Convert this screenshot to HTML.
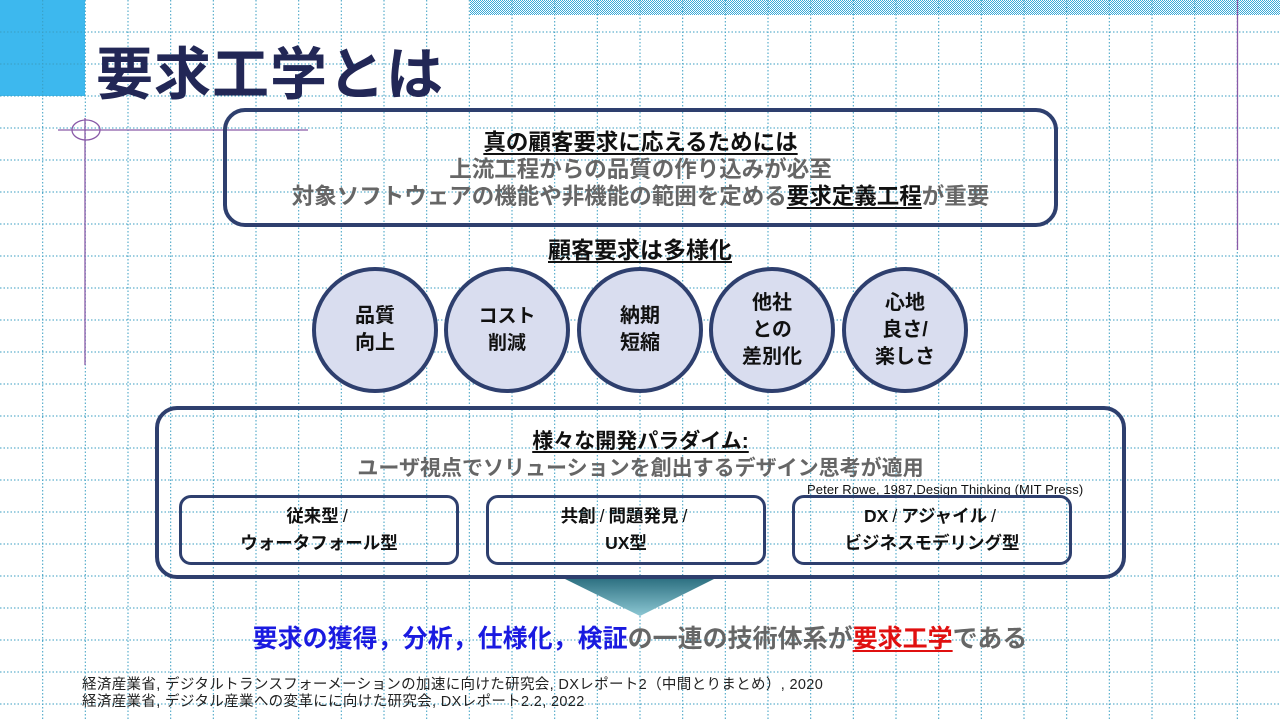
<!DOCTYPE html>
<html><head><meta charset="utf-8"><style>
*{margin:0;padding:0;box-sizing:border-box}
body{width:1280px;height:720px;position:relative;overflow:hidden;background:#fff;font-family:"Liberation Sans","Noto Sans CJK JP",sans-serif;font-weight:bold}
.grid{position:absolute;left:0;top:0;width:1280px;height:720px}
.abs{position:absolute}
.box{position:absolute;border:4px solid #2e3f6e;border-radius:22px}
.c{position:absolute;width:126px;height:126px;border-radius:50%;background:#d9ddef;border:4px solid #2e3f6e;display:flex;align-items:center;justify-content:center;text-align:center;font-size:20px;line-height:27px;color:#111}
.t{position:absolute;left:0;width:100%;text-align:center;white-space:nowrap}
.sb{position:absolute;border:3px solid #2e3f6e;border-radius:12px;display:flex;align-items:center;justify-content:center;text-align:center;font-size:17.5px;line-height:27px;color:#111}
u{text-decoration:underline;text-underline-offset:3px}
.sl{display:inline-block;margin:0 4px;font-weight:normal}
</style></head><body>
<svg class="grid" width="1280" height="720">
<defs>
<pattern id="chk" width="2" height="2" patternUnits="userSpaceOnUse"><rect width="2" height="2" fill="#fff"/><rect width="1" height="1" fill="#3aaad8"/><rect x="1" y="1" width="1" height="1" fill="#3aaad8"/></pattern>
<linearGradient id="ag" x1="0" y1="0" x2="0" y2="1"><stop offset="0" stop-color="#2c6f80"/><stop offset="1" stop-color="#8cc7d3"/></linearGradient>
</defs>
<rect x="0" y="0" width="85" height="96" fill="#3db8ee"/>
<rect x="470" y="0" width="810" height="15" fill="url(#chk)"/>
<g stroke="#3a9ec2" stroke-width="1" stroke-dasharray="1.5,2">
<line x1="42.7" y1="0" x2="42.7" y2="720"/><line x1="85.3" y1="0" x2="85.3" y2="720"/><line x1="128" y1="0" x2="128" y2="720"/><line x1="170.7" y1="0" x2="170.7" y2="720"/><line x1="213.3" y1="0" x2="213.3" y2="720"/><line x1="256" y1="0" x2="256" y2="720"/><line x1="298.7" y1="0" x2="298.7" y2="720"/><line x1="341.3" y1="0" x2="341.3" y2="720"/><line x1="384" y1="0" x2="384" y2="720"/><line x1="426.7" y1="0" x2="426.7" y2="720"/><line x1="469.3" y1="0" x2="469.3" y2="720"/><line x1="512" y1="0" x2="512" y2="720"/><line x1="554.7" y1="0" x2="554.7" y2="720"/><line x1="597.3" y1="0" x2="597.3" y2="720"/><line x1="640" y1="0" x2="640" y2="720"/><line x1="682.7" y1="0" x2="682.7" y2="720"/><line x1="725.3" y1="0" x2="725.3" y2="720"/><line x1="768" y1="0" x2="768" y2="720"/><line x1="810.7" y1="0" x2="810.7" y2="720"/><line x1="853.3" y1="0" x2="853.3" y2="720"/><line x1="896" y1="0" x2="896" y2="720"/><line x1="938.7" y1="0" x2="938.7" y2="720"/><line x1="981.3" y1="0" x2="981.3" y2="720"/><line x1="1024" y1="0" x2="1024" y2="720"/><line x1="1066.7" y1="0" x2="1066.7" y2="720"/><line x1="1109.3" y1="0" x2="1109.3" y2="720"/><line x1="1152" y1="0" x2="1152" y2="720"/><line x1="1194.7" y1="0" x2="1194.7" y2="720"/><line x1="1237.3" y1="0" x2="1237.3" y2="720"/>
<line x1="0" y1="32" x2="1280" y2="32"/><line x1="0" y1="64" x2="1280" y2="64"/><line x1="0" y1="96" x2="1280" y2="96"/><line x1="0" y1="128" x2="1280" y2="128"/><line x1="0" y1="160" x2="1280" y2="160"/><line x1="0" y1="192" x2="1280" y2="192"/><line x1="0" y1="224" x2="1280" y2="224"/><line x1="0" y1="256" x2="1280" y2="256"/><line x1="0" y1="288" x2="1280" y2="288"/><line x1="0" y1="320" x2="1280" y2="320"/><line x1="0" y1="352" x2="1280" y2="352"/><line x1="0" y1="384" x2="1280" y2="384"/><line x1="0" y1="416" x2="1280" y2="416"/><line x1="0" y1="448" x2="1280" y2="448"/><line x1="0" y1="480" x2="1280" y2="480"/><line x1="0" y1="512" x2="1280" y2="512"/><line x1="0" y1="544" x2="1280" y2="544"/><line x1="0" y1="576" x2="1280" y2="576"/><line x1="0" y1="608" x2="1280" y2="608"/><line x1="0" y1="640" x2="1280" y2="640"/><line x1="0" y1="672" x2="1280" y2="672"/><line x1="0" y1="704" x2="1280" y2="704"/>
</g>
<g stroke="#8a5aa8" stroke-width="1.3" fill="none">
<line x1="58" y1="130" x2="308" y2="130"/>
<line x1="85" y1="118" x2="85" y2="365"/>
<ellipse cx="86" cy="130" rx="14" ry="10"/>
<line x1="1237.5" y1="0" x2="1237.5" y2="250"/>
</g>
<polygon points="563,578 716,578 640,616" fill="url(#ag)"/>
</svg>

<div class="abs" style="left:96px;top:40px;font-size:57px;line-height:70px;color:#222756;letter-spacing:1px">要求工学とは</div>

<div class="box" style="left:223px;top:108px;width:835px;height:119px">
<div class="t" style="top:17px;font-size:22.5px;line-height:27px;color:#111"><u>真の顧客要求に応えるためには</u></div>
<div class="t" style="top:44px;font-size:22.5px;line-height:27px;color:#666">上流工程からの品質の作り込みが必至</div>
<div class="t" style="top:71px;font-size:22.5px;line-height:27px;color:#666">対象ソフトウェアの機能や非機能の範囲を定める<span style="color:#111"><u>要求定義工程</u></span>が重要</div>
</div>

<div class="abs" style="left:0;width:1280px;text-align:center;top:235px;font-size:23px;line-height:30px;color:#111"><u>顧客要求は多様化</u></div>

<div class="c" style="left:312px;top:267px">品質<br>向上</div>
<div class="c" style="left:444px;top:267px;font-size:19px">コスト<br>削減</div>
<div class="c" style="left:577px;top:267px">納期<br>短縮</div>
<div class="c" style="left:709px;top:267px">他社<br>との<br>差別化</div>
<div class="c" style="left:842px;top:267px">心地<br>良さ/<br>楽しさ</div>

<div class="box" style="left:155px;top:406px;width:971px;height:173px">
<div class="t" style="top:19px;font-size:21px;line-height:26px;color:#111"><u>様々な開発パラダイム:</u></div>
<div class="t" style="top:46px;font-size:21px;line-height:26px;color:#666">ユーザ視点でソリューションを創出するデザイン思考が適用</div>
<div class="abs" style="left:648px;top:72px;font-size:13px;font-weight:normal;color:#111;white-space:nowrap;letter-spacing:0.1px">Peter Rowe, 1987,Design Thinking (MIT Press)</div>
</div>
<div class="sb" style="left:179px;top:495px;width:280px;height:70px"><span>従来型<span class="sl">/</span><br>ウォータフォール型</span></div>
<div class="sb" style="left:486px;top:495px;width:280px;height:70px"><span>共創<span class="sl">/</span>問題発見<span class="sl">/</span><br>UX型</span></div>
<div class="sb" style="left:792px;top:495px;width:280px;height:70px"><span>DX<span class="sl">/</span>アジャイル<span class="sl">/</span><br>ビジネスモデリング型</span></div>

<div class="abs" style="left:0;width:1280px;text-align:center;top:622px;font-size:25px;line-height:34px;color:#666;white-space:nowrap"><span style="color:#1a1ae0">要求の獲得，分析，仕様化，検証</span>の一連の技術体系が<span style="color:#e01010"><u>要求工学</u></span>である</div>

<div class="abs" style="left:82px;top:677px;font-size:14.5px;line-height:17px;font-weight:normal;color:#222;white-space:nowrap;letter-spacing:0.35px">経済産業省, デジタルトランスフォーメーションの加速に向けた研究会,  DXレポート2（中間とりまとめ）,  2020<br>経済産業省, デジタル産業への変革にに向けた研究会,  DXレポート2.2,  2022</div>
</body></html>
